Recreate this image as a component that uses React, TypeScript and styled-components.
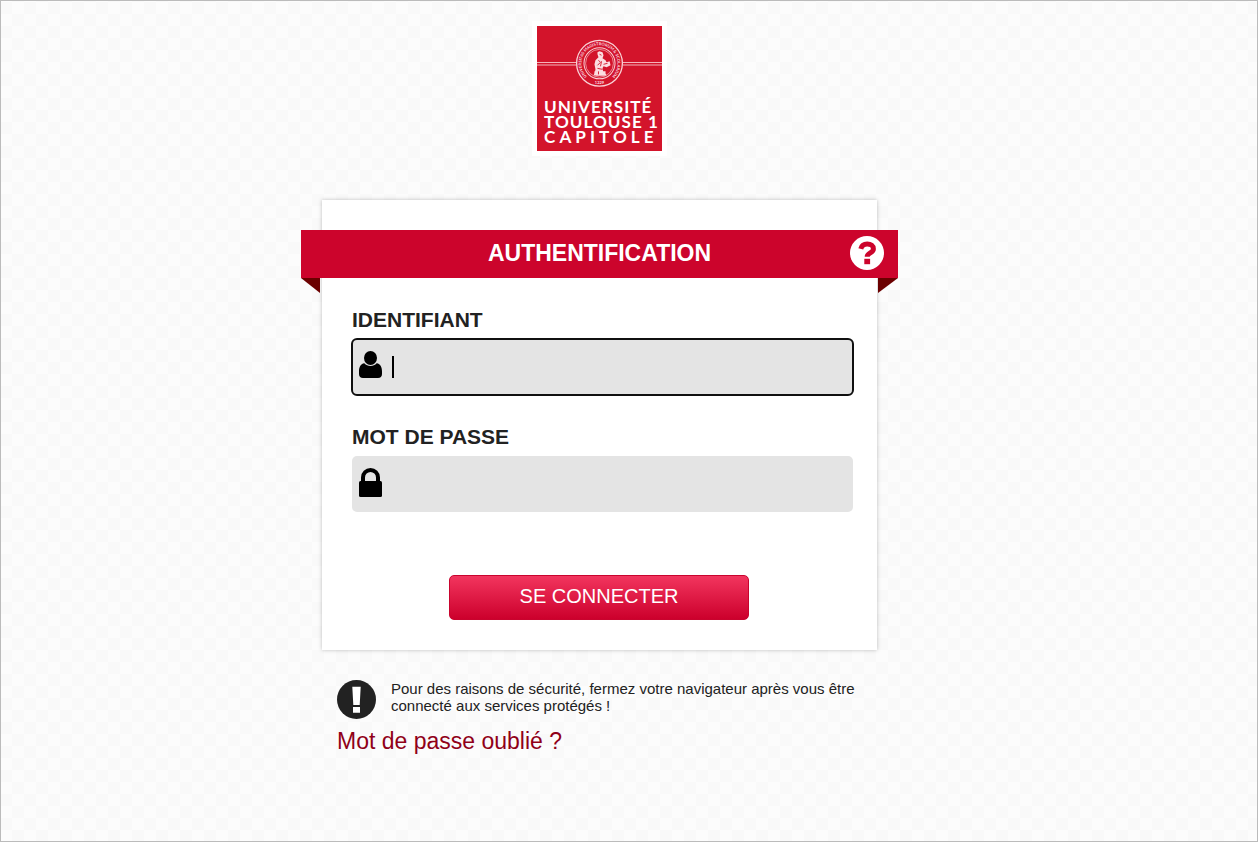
import React from "react";
import styled, { createGlobalStyle, css } from "styled-components";

const GlobalStyle = createGlobalStyle`
  *, *::before, *::after { box-sizing: border-box; }
  body {
    margin: 0;
    color: #222;
    font-family: "Liberation Sans", Arial, sans-serif;
  }
`;

const Page = styled.div`
  min-height: 100vh;
  padding: 20px 59px 80px 0;
  border: 1px solid #bbb;
  background: repeating-conic-gradient(#fcfcfc 0% 25%, #f9f9f9 0% 50%) 11px 13px / 24px 24px;
`;

const Column = styled.main`
  display: flex;
  flex-direction: column;
  width: 100%;
  max-width: 555px;
  margin: 0 auto;
`;

const LogoFrame = styled.div`
  align-self: center;
  padding: 5px;
  background: #fff;

  svg {
    display: block;
  }
`;

const Card = styled.section`
  margin-top: 44px;
  padding: 30px 0;
  background: #fff;
  box-shadow: 0 0 4px rgba(0, 0, 0, 0.25);
`;

const Ribbon = styled.header`
  position: relative;
  display: grid;
  grid-template-columns: 48px 1fr 48px;
  align-items: center;
  height: 48px;
  margin: 0 -21px;
  padding: 0 7px 2px;
  background: #cc042c;

  &::before,
  &::after {
    content: "";
    position: absolute;
    top: 100%;
    height: 15px;
    background: #6b0000;
  }
  &::before {
    left: 0;
    width: 19px;
    clip-path: polygon(0 0, 100% 0, 100% 100%);
  }
  &::after {
    right: 0;
    width: 20px;
    clip-path: polygon(0 0, 100% 0, 0 100%);
  }
`;

const Title = styled.h1`
  grid-column: 2;
  margin: 0;
  color: #fff;
  font-size: 23px;
  line-height: 46px;
  text-align: center;
`;

const HelpLink = styled.a`
  display: block;
  justify-self: center;
  height: 34px;
`;

const Form = styled.form`
  display: flex;
  flex-direction: column;
  padding: 30px 24px 0 30px;
`;

const Field = styled.div`
  margin-bottom: 30px;
`;

const Label = styled.label`
  display: block;
  margin-bottom: 7px;
  font-size: 21px;
  font-weight: bold;
  line-height: 24px;
`;

const InputWrap = styled.div`
  position: relative;

  svg {
    position: absolute;
    top: 12px;
    left: 7px;
  }
`;

const Input = styled.input<{ $active?: boolean }>`
  display: block;
  width: 100%;
  height: 56px;
  padding: 0 10px 0 40px;
  border: 0;
  border-radius: 5px;
  background: #e4e4e4;
  color: #000;
  caret-color: transparent;
  font: 20px "Liberation Sans", Arial, sans-serif;
  outline: none;
  ${(p) =>
    p.$active &&
    css`
      outline: 2px solid #101010;
      outline-offset: -1px;
    `}
`;

const Caret = styled.span`
  position: absolute;
  top: 17px;
  left: 40px;
  width: 2px;
  height: 22px;
  background: #000;
`;

const Submit = styled.button`
  width: 300px;
  height: 45px;
  margin: 33px 0 0 97px;
  padding: 0 0 2px;
  border: 1px solid #c8042e;
  border-radius: 5px;
  background: linear-gradient(#f2355e, #cc002c);
  color: #fff;
  font: 20px "Liberation Sans", Arial, sans-serif;
  cursor: pointer;
`;

const Notes = styled.footer`
  padding: 30px 15px 0;
`;

const Warning = styled.div`
  display: flex;
  gap: 15px;

  svg {
    flex: none;
  }
`;

const WarningText = styled.p`
  margin: 0;
  font-size: 15px;
  line-height: 17px;
`;

const ForgotLink = styled.a`
  display: inline-block;
  margin-top: 8px;
  color: #900018;
  font-size: 23px;
  line-height: 28px;
  text-decoration: none;
`;

const LogoWord = styled.text<{ $wide?: boolean }>`
  fill: #fff;
  font-family: Lato, sans-serif;
  font-size: 17px;
  font-weight: 700;
  letter-spacing: ${(p) => (p.$wide ? 4 : 1)}px;
`;

const SealWord = styled.text`
  fill: #fbdde1;
  font-family: Lato, sans-serif;
  font-size: 4px;
  font-weight: 700;
`;

function Logo() {
  return (
    <svg width="125" height="125" viewBox="0 0 124 124" role="img" aria-label="Université Toulouse 1 Capitole">
      <rect width="124" height="124" fill="#d3142b" />
      <path d="M0 36.3h39M0 38.7h39M85 36.3h39M85 38.7h39" stroke="#f3b3ba" strokeWidth="1" />
      <g fill="none" stroke="#f9d3d7">
        <circle cx="62" cy="37" r="22.7" strokeWidth="1.3" />
        <circle cx="62" cy="37" r="15.4" strokeWidth="1" />
        <circle cx="62" cy="37" r="13.8" strokeWidth="0.6" />
      </g>
      <path id="seal-top" d="M54 53A17.900 17.900 0 1 1 70 53" fill="none" />
      <SealWord>
        <textPath href="#seal-top" startOffset="50%" textAnchor="middle">
          UNIVERSITAS MAGISTRORUM &amp; SCOLARIUM
        </textPath>
      </SealWord>
      <SealWord x="62" y="57.500" textAnchor="middle">1229</SealWord>
      <g fill="#fbdde1">
        <path d="M60 26l2-1 3 1 1 3-1 3 3 2 1 2 3-1 1 4-4 2-3-1-1 2 1 5 2 1v1h-9l-2-1 1-5-1-5 1-4 3-3-1-3z" />
        <path d="M57 45h11v2l1 2H56l1-2z" />
      </g>
      <path d="M62 28l2 1M61 34l2 2-3 3M64 35l-1 5M60 42l5 1M61 45v3M66 38l4-1" stroke="#d3142b" strokeWidth="0.9" fill="none" />
      <LogoWord x="7" y="86">UNIVERSITÉ</LogoWord>
      <LogoWord x="7" y="101">TOULOUSE 1</LogoWord>
      <LogoWord x="7" y="116" $wide>CAPITOLE</LogoWord>
    </svg>
  );
}

function HelpIcon() {
  return (
    <svg width="34" height="34" viewBox="0 0 34 34" aria-hidden="true">
      <circle cx="17" cy="17" r="17" fill="#fff" />
      <path d="M10.800 12.800C11.600 9.600 14 8 17.200 8c3.700 0 6.200 1.900 6.200 4.900 0 4.200-6.200 3.700-6.200 7.800" fill="none" stroke="#cc042c" strokeWidth="5" />
      <rect x="14.300" y="22.800" width="5.800" height="5.400" fill="#cc042c" />
    </svg>
  );
}

function UserIcon() {
  return (
    <svg width="23" height="27" viewBox="0 0 23 27" aria-hidden="true">
      <path d="M5.3 12.3C7 14 9 15 11.5 15s4.500-1 6.200-2.700C21.500 12.800 23 16.500 23 20.500V23c0 2.500-1.500 4-4 4H4c-2.500 0-4-1.500-4-4v-2.500c0-4 1.500-7.700 5.300-8.200z" />
      <ellipse cx="11.500" cy="7" rx="6.500" ry="7" />
    </svg>
  );
}

function LockIcon() {
  return (
    <svg width="23" height="29" viewBox="0 0 23 29" aria-hidden="true">
      <path d="M4 14V9.500a7.500 7.500 0 0 1 15 0V14" fill="none" stroke="#000" strokeWidth="4" />
      <rect y="13" width="23" height="16" rx="1.500" />
    </svg>
  );
}

function AlertIcon() {
  return (
    <svg width="39" height="39" viewBox="0 0 39 39" aria-hidden="true">
      <circle cx="19.5" cy="19.5" r="19.500" fill="#222" />
      <path d="M15.300 6.700h8.400l-1 18.300h-6.400zM16 27h7v5.700h-7z" fill="#fff" />
    </svg>
  );
}

export default function App() {
  return (
    <>
      <GlobalStyle />
      <Page>
        <Column>
          <LogoFrame>
            <Logo />
          </LogoFrame>
          <Card>
            <Ribbon>
              <Title>AUTHENTIFICATION</Title>
              <HelpLink href="#aide" aria-label="Aide">
                <HelpIcon />
              </HelpLink>
            </Ribbon>
            <Form onSubmit={(e) => e.preventDefault()}>
              <Field>
                <Label htmlFor="username">IDENTIFIANT</Label>
                <InputWrap>
                  <Input id="username" type="text" autoComplete="username" $active />
                  <UserIcon />
                  <Caret />
                </InputWrap>
              </Field>
              <Field>
                <Label htmlFor="password">MOT DE PASSE</Label>
                <InputWrap>
                  <Input id="password" type="password" autoComplete="current-password" />
                  <LockIcon />
                </InputWrap>
              </Field>
              <Submit type="submit">SE CONNECTER</Submit>
            </Form>
          </Card>
          <Notes>
            <Warning>
              <AlertIcon />
              <WarningText>
                Pour des raisons de sécurité, fermez votre navigateur après vous être connecté aux services protégés !
              </WarningText>
            </Warning>
            <ForgotLink href="#oubli">Mot de passe oublié ?</ForgotLink>
          </Notes>
        </Column>
      </Page>
    </>
  );
}
